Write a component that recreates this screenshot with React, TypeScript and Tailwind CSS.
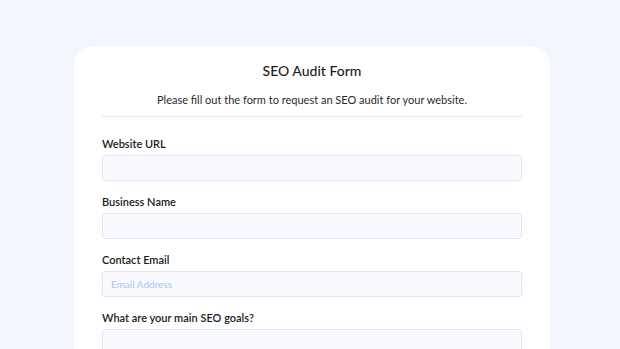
import React from 'react'

const fields = [
  { label: 'Website URL', placeholder: '' },
  { label: 'Business Name', placeholder: '' },
  { label: 'Contact Email', placeholder: 'Email Address' },
  { label: 'What are your main SEO goals?', placeholder: '' },
]

export default function App() {
  return (
    <div className="min-h-screen bg-[#f3f6fd] pt-[46px] font-['Lato',sans-serif] text-[#1c1c1c]">
      <div className="ml-[74px] w-[476px] rounded-t-[20px] bg-white px-7 pt-[15px] pb-6">
        <h1 className="text-center text-[14px] font-medium leading-5">SEO Audit Form</h1>
        <p className="mt-[11px] text-center text-[11px] leading-4 text-[#2a2a2a]">
          Please fill out the form to request an SEO audit for your website.
        </p>
        <div className="mt-[8px] h-px bg-[#e4e6ea]" />
        <form className="mt-[19px] flex flex-col gap-[13px]">
          {fields.map((f) => (
            <div key={f.label} className="flex flex-col">
              <label className="text-[11px] font-semibold leading-4">{f.label}</label>
              <input
                type="text"
                placeholder={f.placeholder}
                className="mt-[3px] h-[26px] rounded-[3px] border border-[#dde7fb] bg-[#f8faff] px-2 text-[10px] placeholder:text-[#a9c2f3] outline-none"
              />
            </div>
          ))}
        </form>
      </div>
    </div>
  )
}
